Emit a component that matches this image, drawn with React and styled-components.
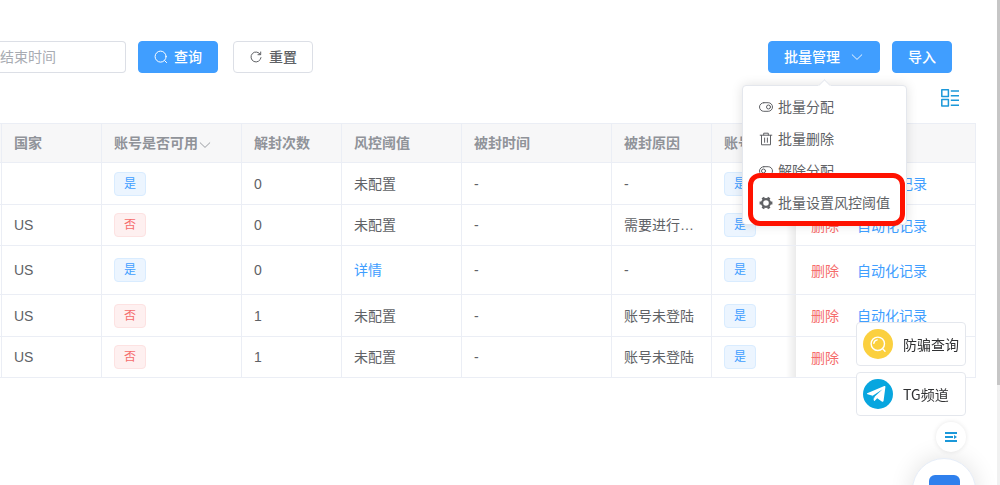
import React from "react";
import styled, { createGlobalStyle, css } from "styled-components";

const Global = createGlobalStyle`
  *, *::before, *::after { box-sizing: border-box; }
  body {
    margin: 0;
    background: #fff;
    color: #606266;
    font: 14px/20px "Liberation Sans", "Noto Sans CJK SC", sans-serif;
    overflow: hidden;
  }
  button, input { font: inherit; }
`;

const Page = styled.main`
  padding: 41px 24px 0 0;
`;

const FilterBar = styled.form`
  display: flex;
  align-items: center;
  padding-right: 24px;
`;

const DateInput = styled.input`
  width: 126px;
  height: 32px;
  margin-right: 12px;
  padding: 0;
  border: 1px solid #dcdfe6;
  border-left: 0;
  border-radius: 0 4px 4px 0;
  outline: 0;
  background: #fff;
  color: #606266;
  &::placeholder { color: #a8abb2; opacity: 1; }
`;

const Button = styled.button`
  display: flex;
  align-items: center;
  justify-content: center;
  gap: 6px;
  height: 32px;
  padding: 0 15px;
  border: 1px solid ${(p) => (p.$primary ? "#409eff" : "#dcdfe6")};
  border-radius: 4px;
  background: ${(p) => (p.$primary ? "#409eff" : "#fff")};
  color: ${(p) => (p.$primary ? "#fff" : "#606266")};
  font-weight: 500;
  white-space: nowrap;
  cursor: pointer;
`;

const QueryGroup = styled.div`
  display: flex;
  gap: 15px;
  margin-right: auto;
`;

const ManageGroup = styled.div`
  display: flex;
  gap: 12px;
`;

const Dropdown = styled.div`
  position: relative;
  ${Button} { gap: 10px; }
`;

const Menu = styled.ul`
  position: absolute;
  z-index: 5;
  top: 44px;
  right: -27px;
  width: 165px;
  margin: 0;
  padding: 5px 0;
  list-style: none;
  border: 1px solid #e4e7ed;
  border-radius: 4px;
  background: #fff;
  box-shadow: 0 0 12px rgba(0, 0, 0, 0.12);
  &::before {
    content: "";
    position: absolute;
    top: -5px;
    left: 77px;
    width: 9px;
    height: 9px;
    background: #fff;
    border: 1px solid #e4e7ed;
    border-color: #e4e7ed transparent transparent #e4e7ed;
    transform: rotate(45deg);
  }
`;

const MenuItem = styled.li`
  position: relative;
  ${(p) =>
    p.$marked &&
    css`
      &::after {
        content: "";
        position: absolute;
        inset: -14px 1px -7px 5px;
        border: 5px solid #ff1200;
        border-radius: 12px;
        pointer-events: none;
      }
    `}
`;

const MenuButton = styled.button`
  display: flex;
  align-items: center;
  gap: 5px;
  width: 100%;
  height: 32px;
  padding: 0 16px;
  border: 0;
  background: none;
  color: #606266;
  white-space: nowrap;
  cursor: pointer;
`;

const TableTools = styled.div`
  display: flex;
  justify-content: flex-end;
  align-items: center;
  height: 50px;
  padding-right: 17px;
`;

const IconButton = styled.button`
  display: grid;
  place-items: center;
  padding: 0;
  border: 0;
  background: none;
  color: #1b98d9;
  cursor: pointer;
`;

const Table = styled.table`
  width: 100%;
  table-layout: fixed;
  border-collapse: separate;
  border-spacing: 0;
  border-top: 1px solid #ebeef5;
`;

const Col = styled.col`
  width: ${(p) => (p.$w ? `${p.$w}px` : "auto")};
`;

const Row = styled.tr`
  height: ${(p) => p.$h}px;
`;

const cell = css`
  padding: 0 12px;
  border: solid #ebeef5;
  border-width: 0 1px 1px 0;
  text-align: left;
  vertical-align: middle;
  white-space: nowrap;
  overflow: hidden;
  text-overflow: ellipsis;
`;

const Th = styled.th`
  ${cell}
  background: #f7f7f8;
  color: #909399;
  font-weight: 700;
  svg { vertical-align: -4px; }
`;

const Td = styled.td`
  ${cell}
  background: #fff;
`;

const Edge = styled.td`
  padding: 0;
  border: solid #ebeef5;
  border-width: 0 1px 1px 0;
  background: ${(p) => (p.$head ? "#f7f7f8" : "#fff")};
`;

const ShadeTd = styled(Td)`
  border-right: 0;
  background: linear-gradient(to left, rgba(0, 0, 0, 0.08), transparent 10px);
`;

const ActionTd = styled(Td)`
  padding: 0 15px;
`;

const Actions = styled.div`
  display: flex;
  gap: 18px;
  padding-top: 1px;
`;

const Link = styled.a`
  color: ${(p) => (p.$danger ? "#f56c6c" : "#409eff")};
  text-decoration: none;
`;

const Tag = styled.span`
  display: block;
  width: 32px;
  height: 24px;
  border: 1px solid ${(p) => (p.$danger ? "#fde2e2" : "#d9ecff")};
  border-radius: 4px;
  background: ${(p) => (p.$danger ? "#fef0f0" : "#ecf5ff")};
  color: ${(p) => (p.$danger ? "#f56c6c" : "#409eff")};
  font-size: 12px;
  line-height: 22px;
  text-align: center;
`;

const Floating = styled.aside`
  position: fixed;
  z-index: 8;
  right: 34px;
  bottom: 33px;
  display: flex;
  flex-direction: column;
  align-items: flex-end;
  gap: 6px;
`;

const FloatLink = styled.a`
  display: flex;
  align-items: center;
  gap: 10px;
  width: 110px;
  height: 44px;
  padding: 0 6px;
  border: 1px solid #e4e7ed;
  border-radius: 4px;
  background: #fff;
  color: #303133;
  font-family: "Noto Sans CJK SC", sans-serif;
  text-decoration: none;
  white-space: nowrap;
`;

const Collapse = styled(IconButton)`
  width: 30px;
  height: 30px;
  border-radius: 50%;
  background: #fff;
  box-shadow: 0 0 5px rgba(0, 0, 0, 0.1);
`;

const Chat = styled.button`
  position: fixed;
  z-index: 7;
  right: 24px;
  bottom: -37px;
  display: flex;
  justify-content: center;
  width: 64px;
  height: 64px;
  padding: 16px 0 0;
  border: 1px solid #e6edf8;
  border-radius: 50%;
  background: #fff;
  box-shadow: 0 0 24px rgba(0, 0, 0, 0.12);
`;

const ScrollTrack = styled.div`
  position: fixed;
  top: 0;
  right: 0;
  bottom: 0;
  width: 3px;
  background: #f1f1f1;
`;

const ScrollThumb = styled.div`
  height: calc(100% - 100px);
  background: #c6c6c6;
`;

const Svg = ({ size = 14, box = 14, children, ...rest }) => (
  <svg
    width={size}
    height={size}
    viewBox={`0 0 ${box} ${box}`}
    fill="none"
    stroke="currentColor"
    strokeLinecap="round"
    strokeLinejoin="round"
    aria-hidden="true"
    {...rest}
  >
    {children}
  </svg>
);

const SearchIcon = () => (
  <Svg>
    <circle cx="6.6" cy="6.6" r="5.5" />
    <path d="M10.6 10.6 12.6 12.6" />
  </Svg>
);
const RefreshIcon = () => (
  <Svg>
    <path d="M11.4 4.5A5 5 0 1 0 12 7.6M11.7 2v2.7H9" />
  </Svg>
);
const ArrowIcon = () => (
  <Svg strokeWidth="0.9">
    <path d="M2.2 4.8 7 9.4l4.8-4.6" />
  </Svg>
);
const SwitchIcon = ({ off }) => (
  <Svg>
    <rect x="0.5" y="2.7" width="13" height="8.6" rx="4.3" />
    <circle cx={off ? 4.5 : 9.5} cy="7" r="2" />
  </Svg>
);
const TrashIcon = () => (
  <Svg>
    <path d="M1.2 3.2h11.6M4.7 3V1.2h4.6V3M2.5 3.4v9.4h9V3.4M5.6 6v4.3M8.4 6v4.3" />
  </Svg>
);
const GearIcon = () => (
  <Svg>
    <circle cx="7" cy="7" r="3.9" strokeWidth="2.2" />
    <path
      strokeWidth="2.8"
      strokeLinecap="butt"
      d="M4.8 3.2 3.8 1.5M9.2 3.2l1-1.7M11 7h2.400M9.200 10.800l1 1.700M4.800 10.800l-1 1.700M3 7H.6"
    />
  </Svg>
);
const ListIcon = () => (
  <Svg size={18} box={18} strokeLinecap="butt" strokeWidth="1.5">
    <path d="M.8.8h6.600v6.600H.8zM.8 10.500h6.600v6.600H.8zM9.800 2h8.200M9.800 6.800h8.200M9.800 11.300h8.200M9.800 16.200h8.200" />
  </Svg>
);

const columns = [2, 100, 140, 100, 120, 150, 100, 84, 0];

const rows = [
  { h: 42, country: "", ok: true, count: 0, risk: "未配置", reason: "-" },
  { h: 41, country: "US", ok: false, count: 0, risk: "未配置", reason: "需要进行身份验证" },
  { h: 49, country: "US", ok: true, count: 0, detail: true, reason: "-" },
  { h: 42, country: "US", ok: false, count: 1, risk: "未配置", reason: "账号未登陆" },
  { h: 41, country: "US", ok: false, count: 1, risk: "未配置", reason: "账号未登陆" },
];

const menu = [
  { label: "批量分配", icon: <SwitchIcon /> },
  { label: "批量删除", icon: <TrashIcon /> },
  { label: "解除分配", icon: <SwitchIcon off /> },
  { label: "批量设置风控阈值", icon: <GearIcon />, marked: true },
];

export default function App() {
  return (
    <>
      <Global />
      <Page>
        <FilterBar onSubmit={(e) => e.preventDefault()}>
          <DateInput type="text" placeholder="结束时间" aria-label="结束时间" />
          <QueryGroup>
            <Button $primary type="submit"><SearchIcon />查询</Button>
            <Button type="reset"><RefreshIcon />重置</Button>
          </QueryGroup>
          <ManageGroup>
            <Dropdown>
              <Button $primary type="button" aria-haspopup="true" aria-expanded="true">
                批量管理<ArrowIcon />
              </Button>
              <Menu>
                {menu.map((m) => (
                  <MenuItem key={m.label} $marked={m.marked}>
                    <MenuButton type="button">{m.icon}{m.label}</MenuButton>
                  </MenuItem>
                ))}
              </Menu>
            </Dropdown>
            <Button $primary type="button">导入</Button>
          </ManageGroup>
        </FilterBar>
        <TableTools>
          <IconButton type="button" aria-label="列设置"><ListIcon /></IconButton>
        </TableTools>
        <Table>
          <colgroup>
            {columns.map((w, i) => <Col key={i} $w={w} />)}
          </colgroup>
          <thead>
            <Row $h={39}>
              <Edge $head />
              <Th>国家</Th>
              <Th>账号是否可用<ArrowIcon /></Th>
              <Th>解封次数</Th>
              <Th>风控阈值</Th>
              <Th>被封时间</Th>
              <Th>被封原因</Th>
              <Th>账号</Th>
              <Th />
            </Row>
          </thead>
          <tbody>
            {rows.map((r, i) => (
              <Row key={i} $h={r.h}>
                <Edge />
                <Td>{r.country}</Td>
                <Td><Tag $danger={!r.ok}>{r.ok ? "是" : "否"}</Tag></Td>
                <Td>{r.count}</Td>
                <Td>{r.detail ? <Link href="#detail">详情</Link> : r.risk}</Td>
                <Td>-</Td>
                <Td>{r.reason}</Td>
                <ShadeTd><Tag>是</Tag></ShadeTd>
                <ActionTd>
                  <Actions>
                    <Link $danger href="#delete">删除</Link>
                    <Link href="#log">自动化记录</Link>
                  </Actions>
                </ActionTd>
              </Row>
            ))}
          </tbody>
        </Table>
      </Page>

      <Floating>
        <FloatLink href="#check">
          <svg width="30" height="30" viewBox="0 0 30 30" fill="none" stroke="#fff" strokeLinecap="round" aria-hidden="true">
            <circle cx="15" cy="15" r="15" fill="#fbd03f" stroke="none" />
            <circle cx="14.8" cy="14.8" r="6.7" strokeWidth="1.4" />
            <path d="M10.8 14.3a4 4 0 0 1 3.4-3.4M19.6 19.6l2.4 2.6" strokeWidth="1.4" />
          </svg>
          防骗查询
        </FloatLink>
        <FloatLink href="#tg">
          <svg width="30" height="30" viewBox="0 0 30 30" aria-hidden="true">
            <circle cx="15" cy="15" r="15" fill="#08a6df" />
            <path d="M4.200 14.300 21.300 7Q22.600 6.600 22.400 8L20.600 21.800Q20.200 23.500 18.800 22.500L14.200 19.200 11.800 21.800Q11 22.400 10.800 21.200L9.700 16.700 4.500 15.300Q3.400 14.900 4.200 14.300Z" fill="#fff" />
            <path d="m10.600 20.500-.9-3.800 9.900-6.400-7.800 7.300Z" fill="#08a6df" />
          </svg>
          TG频道
        </FloatLink>
        <Collapse type="button" aria-label="收起">
          <svg width="12" height="10" viewBox="0 0 12 10" fill="currentColor" aria-hidden="true">
            <path d="M0 0h12v2H0zM0 4h8v2H0zM9 3l3 2-3 2zM0 8h12v2H0z" />
          </svg>
        </Collapse>
      </Floating>
      <Chat type="button" aria-label="在线客服">
        <svg width="31" height="28" viewBox="0 0 31 28" aria-hidden="true">
          <rect width="31" height="24" rx="6" fill="#2f80ed" />
          <path d="M10 23h11l-5.500 5z" fill="#2f80ed" />
        </svg>
      </Chat>
      <ScrollTrack><ScrollThumb /></ScrollTrack>
    </>
  );
}
